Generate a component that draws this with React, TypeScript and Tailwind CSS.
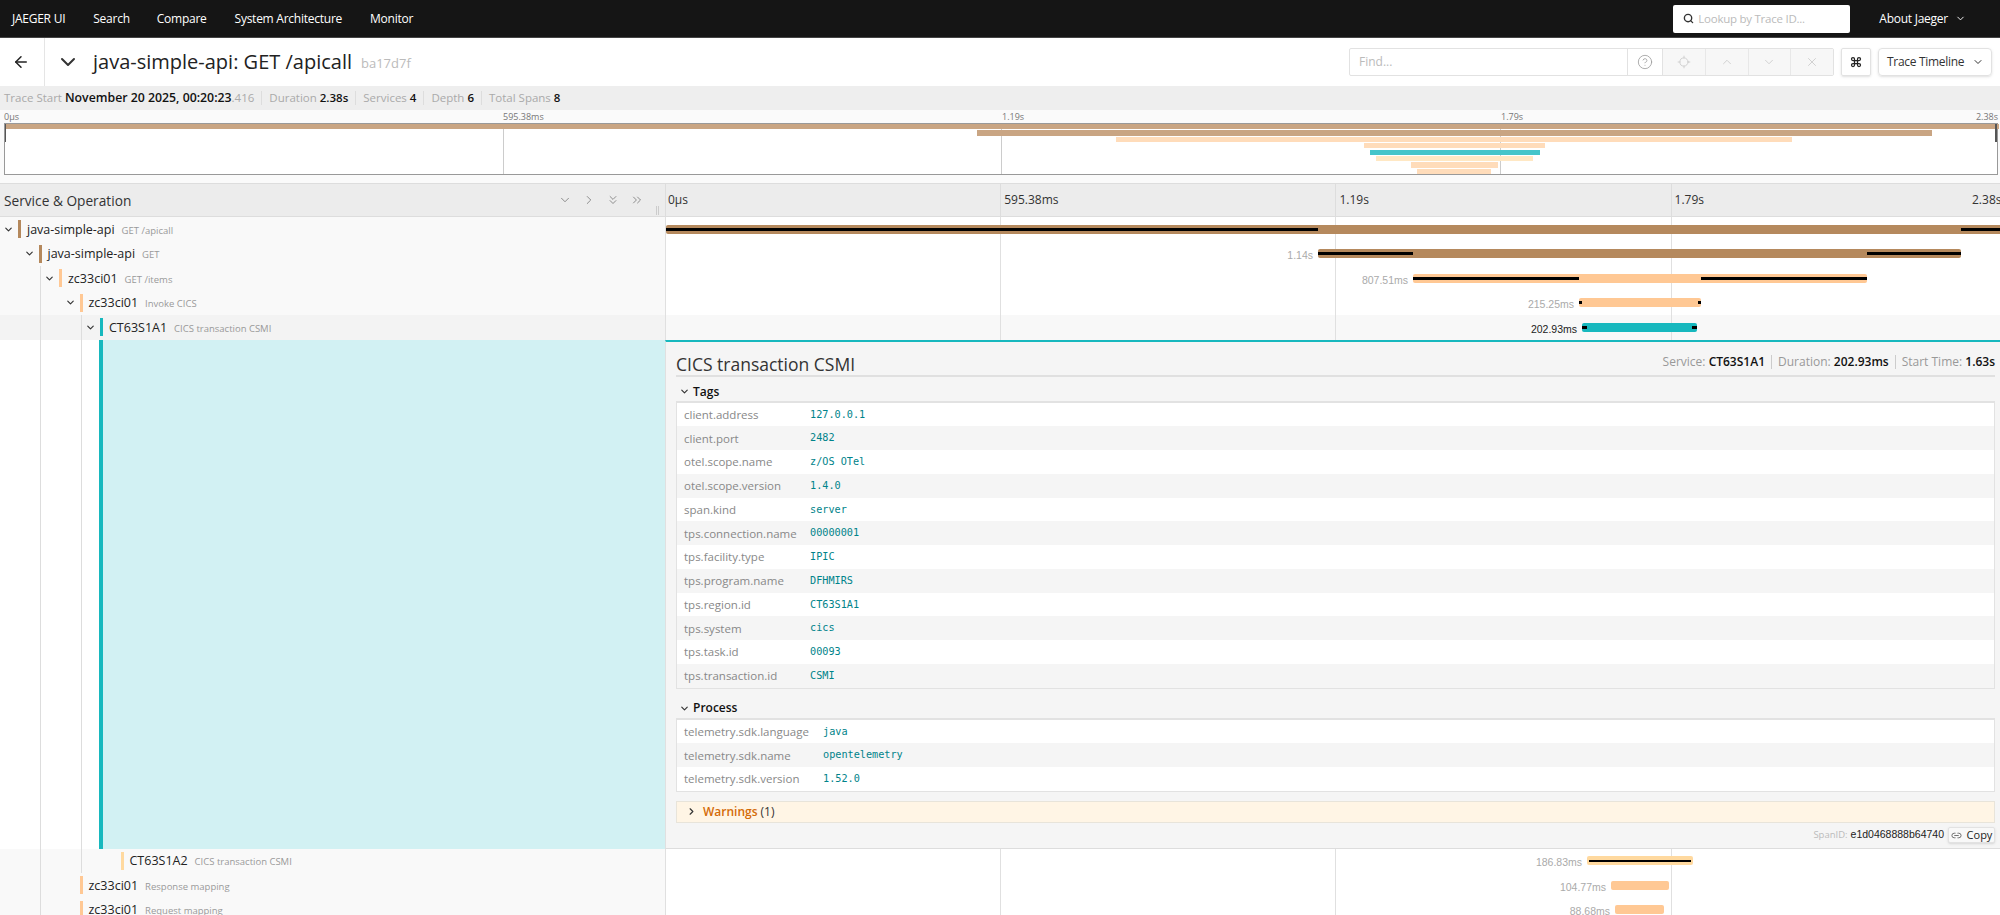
import { ArrowLeft, ChevronDown, ChevronRight, ChevronUp, ChevronsDown, ChevronsRight, CircleHelp, Command, Link2, Locate, Search, X } from 'lucide-react';

const TIMELINE_LEFT = 666;
const TIMELINE_WIDTH = 1334;
const TICK_STEP = 335.2;

const ticks = ['0µs', '595.38ms', '1.19s', '1.79s'];

const miniBars = [
  { left: 0, width: 1994, color: 'bg-[#c9a583]' },
  { left: 972, width: 955, color: 'bg-[#c9a583]' },
  { left: 1111, width: 676, color: 'bg-[#ffdcba]' },
  { left: 1359, width: 181, color: 'bg-[#ffdcba]' },
  { left: 1365, width: 170, color: 'bg-[#45c5ca]' },
  { left: 1371, width: 157, color: 'bg-[#ffe8c4]' },
  { left: 1406, width: 87, color: 'bg-[#ffdcba]' },
  { left: 1412, width: 74, color: 'bg-[#ffdcba]' },
];

const BROWN = 'bg-[#b5895d]';
const PEACH = 'bg-[#ffc894]';
const TEAL = 'bg-[#17b8be]';
const SAND = 'bg-[#ffd99f]';

type Span = {
  indent: number;
  toggle: boolean;
  service: string;
  op: string;
  color: string;
  start: number;
  end: number;
  label?: string;
  lines: [number, number][];
  thin?: boolean;
  active?: boolean;
};

const before: Span[] = [
  { indent: 0, toggle: true, service: 'java-simple-api', op: 'GET /apicall', color: BROWN, start: 666, end: 2010, lines: [[666, 1318], [1961, 2010]] },
  { indent: 1, toggle: true, service: 'java-simple-api', op: 'GET', color: BROWN, start: 1318, end: 1961, label: '1.14s', lines: [[1318, 1413], [1867, 1961]] },
  { indent: 2, toggle: true, service: 'zc33ci01', op: 'GET /items', color: PEACH, start: 1413, end: 1867, label: '807.51ms', lines: [[1413, 1579], [1701, 1867]] },
  { indent: 3, toggle: true, service: 'zc33ci01', op: 'Invoke CICS', color: PEACH, start: 1579, end: 1701, label: '215.25ms', lines: [[1579, 1582], [1698, 1701]] },
  { indent: 4, toggle: true, service: 'CT63S1A1', op: 'CICS transaction CSMI', color: TEAL, start: 1582, end: 1697, label: '202.93ms', lines: [[1582, 1587], [1692, 1697]], active: true },
];

const after: Span[] = [
  { indent: 5, toggle: false, service: 'CT63S1A2', op: 'CICS transaction CSMI', color: SAND, start: 1587, end: 1693, label: '186.83ms', lines: [[1589, 1691]], thin: true },
  { indent: 3, toggle: false, service: 'zc33ci01', op: 'Response mapping', color: PEACH, start: 1611, end: 1669, label: '104.77ms', lines: [] },
  { indent: 3, toggle: false, service: 'zc33ci01', op: 'Request mapping', color: PEACH, start: 1615, end: 1664, label: '88.68ms', lines: [] },
];

const tags = [
  ['client.address', '127.0.0.1'],
  ['client.port', '2482'],
  ['otel.scope.name', 'z/OS OTel'],
  ['otel.scope.version', '1.4.0'],
  ['span.kind', 'server'],
  ['tps.connection.name', '00000001'],
  ['tps.facility.type', 'IPIC'],
  ['tps.program.name', 'DFHMIRS'],
  ['tps.region.id', 'CT63S1A1'],
  ['tps.system', 'cics'],
  ['tps.task.id', '00093'],
  ['tps.transaction.id', 'CSMI'],
];

const process = [
  ['telemetry.sdk.language', 'java'],
  ['telemetry.sdk.name', 'opentelemetry'],
  ['telemetry.sdk.version', '1.52.0'],
];

function TickLines() {
  return (
    <>
      {[1, 2, 3].map((i) => (
        <div key={i} className="absolute top-0 bottom-0 w-px bg-[#e0e0e0]" style={{ left: i * TICK_STEP - 1 }} />
      ))}
    </>
  );
}

function SpanRow({ span }: { span: Span }) {
  const leftBg = span.active ? 'bg-[#f3f3f3]' : 'bg-[#f9f9f9]';
  const rightBg = span.active ? 'bg-[#f8f8f8]' : 'bg-white';
  return (
    <div className="flex h-[24.5px]">
      <div className={`flex w-[665px] shrink-0 items-center ${leftBg}`} style={{ paddingLeft: span.indent * 20.5 }}>
        <div className="flex w-[18px] shrink-0 items-center justify-center">
          {span.toggle && <ChevronDown size={11} strokeWidth={2.5} className="mr-[1px] text-[#333]" />}
        </div>
        <div className={`h-[18px] w-[3px] shrink-0 ${span.color}`} />
        <span className="ml-[6px] mt-[2px] text-[12.5px] text-[#222]">{span.service}</span>
        <span className="ml-[7px] mt-[3px] text-[9.5px] text-[#999]">{span.op}</span>
      </div>
      <div className={`relative flex-1 overflow-hidden border-l border-[#e0e0e0] ${rightBg}`}>
        <TickLines />
        <div
          className={`absolute top-[7.5px] h-[9px] rounded-[2px] ${span.color}`}
          style={{ left: span.start - TIMELINE_LEFT, width: span.end - span.start }}
        />
        {span.lines.map(([a, b]) => (
          <div
            key={a}
            className={`absolute bg-black ${span.thin ? 'top-[11px] h-[2px]' : 'top-[10.5px] h-[3px]'}`}
            style={{ left: a - TIMELINE_LEFT, width: b - a }}
          />
        ))}
        {span.label && (
          <span
            className={`absolute top-[6.5px] font-['Liberation_Sans',sans-serif] text-[10.5px] leading-[14px] ${span.active ? 'text-[#222]' : 'text-[#aaa]'}`}
            style={{ right: TIMELINE_WIDTH - (span.start - TIMELINE_LEFT) + 5 }}
          >
            {span.label}
          </span>
        )}
      </div>
    </div>
  );
}

function KeyValueTable({ rows, keyWidth }: { rows: string[][]; keyWidth: string }) {
  return (
    <div className="border border-t-2 border-[#e2e2e2]">
      {rows.map(([k, v], i) => (
        <div key={k} className={`flex h-[23.75px] items-center pl-[7px] ${i % 2 ? 'bg-[#f5f5f5]' : 'bg-white'}`}>
          <span className={`${keyWidth} shrink-0 text-[11.5px] text-[#888]`}>{k}</span>
          <span className="font-['DejaVu_Sans_Mono',monospace] text-[10.2px] text-[#00838a]">{v}</span>
        </div>
      ))}
    </div>
  );
}

function SpanDetail() {
  return (
    <div className="flex h-[509px]">
      <div className="flex w-[665px] shrink-0 bg-white">
        <div className="w-[99px] shrink-0" />
        <div className="w-[4px] shrink-0 bg-[#17b8be]" />
        <div className="flex-1 bg-[#d2f1f3]" />
      </div>
      <div className="flex flex-1 flex-col border-t-2 border-b border-l border-t-[#17b8be] border-b-[#ddd] border-l-[#e0e0e0] bg-[#f5f5f5] pl-[10px] pr-[5px]">
        <div className="flex h-[35px] shrink-0 items-end justify-between border-b-2 border-[#e0e0e0]">
          <span className="text-[17.5px] leading-[22px] text-[#333]">CICS transaction CSMI</span>
          <div className="mb-[4px] flex items-center text-[12px] text-[#999]">
            <span>Service: <b className="font-semibold text-[#111]">CT63S1A1</b></span>
            <span className="mx-[6px] h-[14px] w-px bg-[#ccc]" />
            <span>Duration: <b className="font-semibold text-[#111]">202.93ms</b></span>
            <span className="mx-[6px] h-[14px] w-px bg-[#ccc]" />
            <span>Start Time: <b className="font-semibold text-[#111]">1.63s</b></span>
          </div>
        </div>
        <div className="flex h-[24px] items-center pl-[3px] pt-[6px]">
          <ChevronDown size={11} strokeWidth={2.5} className="text-[#333]" />
          <span className="ml-[3px] text-[12px] font-semibold text-[#111]">Tags</span>
        </div>
        <KeyValueTable rows={tags} keyWidth="w-[126px]" />
        <div className="flex h-[29px] items-center pl-[3px] pt-[10px]">
          <ChevronDown size={11} strokeWidth={2.5} className="text-[#333]" />
          <span className="ml-[3px] text-[12px] font-semibold text-[#111]">Process</span>
        </div>
        <KeyValueTable rows={process} keyWidth="w-[139px]" />
        <div className="mt-[9px] flex h-[22px] shrink-0 items-center border border-[#e8e4da] bg-[#fff5e5] pl-[9px]">
          <ChevronRight size={11} strokeWidth={2.5} className="text-[#333]" />
          <span className="ml-[6px] text-[12px] font-semibold text-[#d46b08]">Warnings</span>
          <span className="ml-[3px] text-[12px] text-[#333]">(1)</span>
        </div>
        <div className="flex flex-1 items-center justify-end">
          <span className="text-[9.5px] text-[#bbb]">SpanID:</span>
          <span className="ml-[3px] font-['Liberation_Sans',sans-serif] text-[10.5px] text-[#222]">e1d0468888b64740</span>
          <div className="ml-[4px] flex h-[16px] w-[47px] items-center justify-center gap-[5px] rounded-[2px] border border-[#e2e2e2] bg-[#f8f8f8] text-[11px] text-[#222] shadow-sm">
            <Link2 size={11} className="text-[#666]" />
            Copy
          </div>
        </div>
      </div>
    </div>
  );
}

export default function App() {
  return (
    <div className="h-screen w-full overflow-hidden bg-white font-['Open_Sans',sans-serif]">
      <nav className="flex h-[38px] items-center border-b border-[#444] bg-[#151515] text-[12px] tracking-[-0.25px] text-white">
        <span className="ml-[12px]">JAEGER UI</span>
        <span className="ml-[28px]">Search</span>
        <span className="ml-[27px]">Compare</span>
        <span className="ml-[28px]">System Architecture</span>
        <span className="ml-[28px]">Monitor</span>
        <div className="ml-auto flex h-[28px] w-[177px] items-center rounded-[2px] bg-white pl-[10px] text-[11.5px] text-[#bbb]">
          <Search size={11} strokeWidth={3} className="mr-[4px] text-[#333]" />
          Lookup by Trace ID...
        </div>
        <span className="ml-[29px]">About Jaeger</span>
        <ChevronDown size={11} className="ml-[7px] mr-[34px]" />
      </nav>

      <div className="flex h-[48px] items-center">
        <div className="flex h-full w-[45px] items-center justify-center border-r border-[#e5e5e5]">
          <ArrowLeft size={18} className="mr-[3px] text-[#222]" />
        </div>
        <ChevronDown size={24} strokeWidth={2} className="ml-[11px] text-[#333]" />
        <span className="ml-[13px] text-[20px] text-[#222]">java-simple-api: GET /apicall</span>
        <span className="ml-[9px] mt-[3px] text-[13px] text-[#bbb]">ba17d7f</span>

        <div className="ml-auto flex h-[28px] w-[485px] rounded-[2px] border border-[#e2e2e2]">
          <div className="flex w-[278px] items-center border-r border-[#e2e2e2] pl-[9px] text-[12px] text-[#bbb]">Find...</div>
          <div className="flex w-[35px] items-center justify-center border-r border-[#e2e2e2]">
            <CircleHelp size={16} strokeWidth={1.2} className="text-[#999]" />
          </div>
          {[Locate, ChevronUp, ChevronDown, X].map((Icon, i) => (
            <div key={i} className="flex flex-1 items-center justify-center border-r border-[#e8e8e8] bg-[#f7f7f7] last:border-r-0">
              <Icon size={14} strokeWidth={1.5} className="text-[#ccc]" />
            </div>
          ))}
        </div>
        <div className="ml-[7px] flex h-[28px] w-[30px] items-center justify-center rounded-[2px] border border-[#e2e2e2] shadow-sm">
          <Command size={12} strokeWidth={2.5} className="text-[#222]" />
        </div>
        <div className="ml-[7px] mr-[8px] flex h-[28px] w-[114px] items-center justify-between rounded-[4px] border border-[#e2e2e2] pl-[8px] pr-[7px] text-[12px] tracking-[-0.3px] text-[#333] shadow-sm">
          Trace Timeline
          <ChevronDown size={12} strokeWidth={2} />
        </div>
      </div>

      <div className="flex h-[24px] items-center bg-[#eeeeee] pl-[4px] text-[11.5px] text-[#aaa]">
        <span>Trace Start <b className="text-[12.3px] font-semibold text-[#111]">November 20 2025, 00:20:23</b>.416</span>
        <span className="mx-[7px] h-[14px] w-px bg-[#ddd]" />
        <span>Duration <b className="font-semibold text-[#111]">2.38s</b></span>
        <span className="mx-[7px] h-[14px] w-px bg-[#ddd]" />
        <span>Services <b className="font-semibold text-[#111]">4</b></span>
        <span className="mx-[7px] h-[14px] w-px bg-[#ddd]" />
        <span>Depth <b className="font-semibold text-[#111]">6</b></span>
        <span className="mx-[7px] h-[14px] w-px bg-[#ddd]" />
        <span>Total Spans <b className="font-semibold text-[#111]">8</b></span>
      </div>

      <div className="h-[73px] bg-[#fafafa] px-[1px]">
        <div className="relative h-[13px] text-[9px] leading-[13px] text-[#777]">
          <span className="absolute left-[3px]">0µs</span>
          <span className="absolute left-[502px]">595.38ms</span>
          <span className="absolute left-[1001px]">1.19s</span>
          <span className="absolute left-[1500px]">1.79s</span>
          <span className="absolute right-[1px]">2.38s</span>
        </div>
        <div className="relative ml-[3px] mr-[1px] flex h-[52px] flex-col gap-[1.1px] border border-[#999] bg-white">
          {[497.7, 996.4, 1495].map((x) => (
            <div key={x} className="absolute top-0 bottom-0 w-px bg-[#ccc]" style={{ left: x }} />
          ))}
          {miniBars.map((b, i) => (
            <div key={i} className={`relative h-[5.3px] shrink-0 ${b.color}`} style={{ marginLeft: b.left, width: b.width }} />
          ))}
          <div className="absolute top-0 left-0 h-[18px] w-[1px] bg-[#555]" />
          <div className="absolute top-0 right-0 h-[18px] w-[2px] bg-[#555]" />
        </div>
      </div>

      <div className="flex h-[34px] border-y border-[#ddd] bg-[#ececec]">
        <div className="relative flex w-[665px] shrink-0 items-center pl-[4px] text-[13.7px] text-[#333]">
          <span className="mt-[2px]">Service & Operation</span>
          <div className="absolute right-[21px] flex items-center gap-[10px] text-[#777]">
            <ChevronDown size={14} strokeWidth={1.4} />
            <ChevronRight size={14} strokeWidth={1.4} />
            <ChevronsDown size={14} strokeWidth={1.4} />
            <ChevronsRight size={14} strokeWidth={1.4} />
          </div>
          <div className="absolute right-[6px] bottom-[1px] h-[9px] w-[3px] border-x border-[#ccc]" />
        </div>
        <div className="relative flex-1 overflow-hidden border-l border-[#ddd] text-[12px] leading-[32px] text-[#333]">
          {ticks.map((t, i) => (
            <div key={t} className={`absolute top-0 bottom-0 pl-[3px] ${i ? 'border-l border-[#ddd]' : ''}`} style={{ left: i * TICK_STEP - 1 }}>
              {t}
            </div>
          ))}
          <span className="absolute left-[1306px] top-0">2.38s</span>
        </div>
      </div>

      <div className="relative">
        {before.map((s, i) => (
          <SpanRow key={i} span={s} />
        ))}
        <SpanDetail />
        {after.map((s, i) => (
          <SpanRow key={i} span={s} />
        ))}
        <div className="absolute top-[49px] bottom-0 left-[40px] w-px bg-[#ddd]" />
        <div className="absolute top-[98px] left-[81px] h-[558px] w-px bg-[#ddd]" />
      </div>
    </div>
  );
}
